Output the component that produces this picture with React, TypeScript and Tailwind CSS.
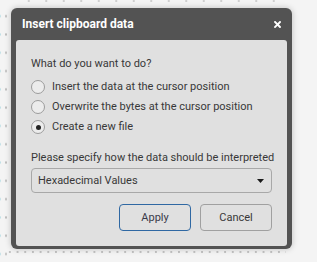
import React from "react";

function Radio({ checked, label }: { checked?: boolean; label: string }) {
  return (
    <div className="flex h-[20px] items-center">
      <div className="flex h-[14px] w-[14px] items-center justify-center rounded-full border border-[#9c9c9c] bg-[#ececec]">
        {checked && <div className="h-[5px] w-[5px] rounded-full bg-[#222]" />}
      </div>
      <span className="ml-[7px] text-[11px] leading-[14px] text-[#383838]">{label}</span>
    </div>
  );
}

export default function App() {
  return (
    <div
      className="relative h-[262px] w-[317px] overflow-hidden bg-[#f4f4f4]"
      style={{ fontFamily: "Roboto, 'Noto Sans', sans-serif" }}
    >
      {/* decorative dotted background behind dialog */}
      <div className="absolute left-[5px] top-[0px] h-[262px] w-[2px] bg-[radial-gradient(circle,#bdbdbd_1px,transparent_1.2px)] bg-[size:2px_18.3px] bg-[position:0_7px]" />
      <div className="absolute left-[-1px] top-[0px] h-[262px] w-[2px] bg-[radial-gradient(circle,#bfe0e6_1px,transparent_1.2px)] bg-[size:2px_18.3px] bg-[position:0_7px]" />
      <div className="absolute left-[6px] top-[251px] h-[2px] w-[280px] bg-[radial-gradient(circle,#c4c4c4_1px,transparent_1.2px)] bg-[size:7.7px_2px]" />
      <div className="absolute left-[20px] top-[0px] h-[2px] w-[260px] bg-[radial-gradient(circle,#cfcfcf_1px,transparent_1.2px)] bg-[size:17.5px_2px]" />

      <div className="relative ml-[11px] mt-[8px] flex h-[241px] w-[281px] flex-col rounded-[6px] bg-[#535353] px-[5px] pb-[4px] shadow-[0_0_6px_rgba(0,0,0,0.22)]">
        <div className="flex h-[32px] shrink-0 items-center justify-between pl-[6px] pr-[6px]">
          <span className="text-[12px] font-bold leading-[14px] text-white">Insert clipboard data</span>
          <svg width="7" height="7" viewBox="0 0 7 7">
            <path d="M1 1L6 6M6 1L1 6" stroke="#ffffff" strokeWidth="1.9" strokeLinecap="square" />
          </svg>
        </div>
        <div className="flex flex-1 flex-col rounded-[3px] bg-[#e0e0e0] px-[15px] pt-[17px] pb-[15px]">
          <div className="text-[11px] leading-[14px] text-[#383838]">What do you want to do?</div>
          <div className="mt-[6px] flex flex-col">
            <Radio label="Insert the data at the cursor position" />
            <Radio label="Overwrite the bytes at the cursor position" />
            <Radio checked label="Create a new file" />
          </div>
          <div className="mt-[14px] whitespace-nowrap text-[11px] leading-[14px] text-[#383838]">
            Please specify how the data should be interpreted
          </div>
          <div className="mt-[3px] flex h-[25px] items-center justify-between rounded-[4px] border border-[#a8a8a8] bg-[#e0e0e0] pl-[6px] pr-[7px]">
            <span className="text-[11px] leading-[14px] text-[#383838]">Hexadecimal Values</span>
            <svg width="7" height="4" viewBox="0 0 7 4">
              <path d="M0 0H7L3.5 4Z" fill="#1a1a1a" />
            </svg>
          </div>
          <div className="mt-[11px] flex justify-end gap-[9px]">
            <button className="flex h-[27px] w-[72px] items-center justify-center rounded-[4px] border border-[#2f68a3] bg-[#e0e0e0] text-[11px] leading-[14px] text-[#3a3a4a]">
              Apply
            </button>
            <button className="flex h-[27px] w-[72px] items-center justify-center rounded-[4px] border border-[#a0a0a0] bg-[#e0e0e0] text-[11px] leading-[14px] text-[#383838]">
              Cancel
            </button>
          </div>
        </div>
      </div>
    </div>
  );
}
